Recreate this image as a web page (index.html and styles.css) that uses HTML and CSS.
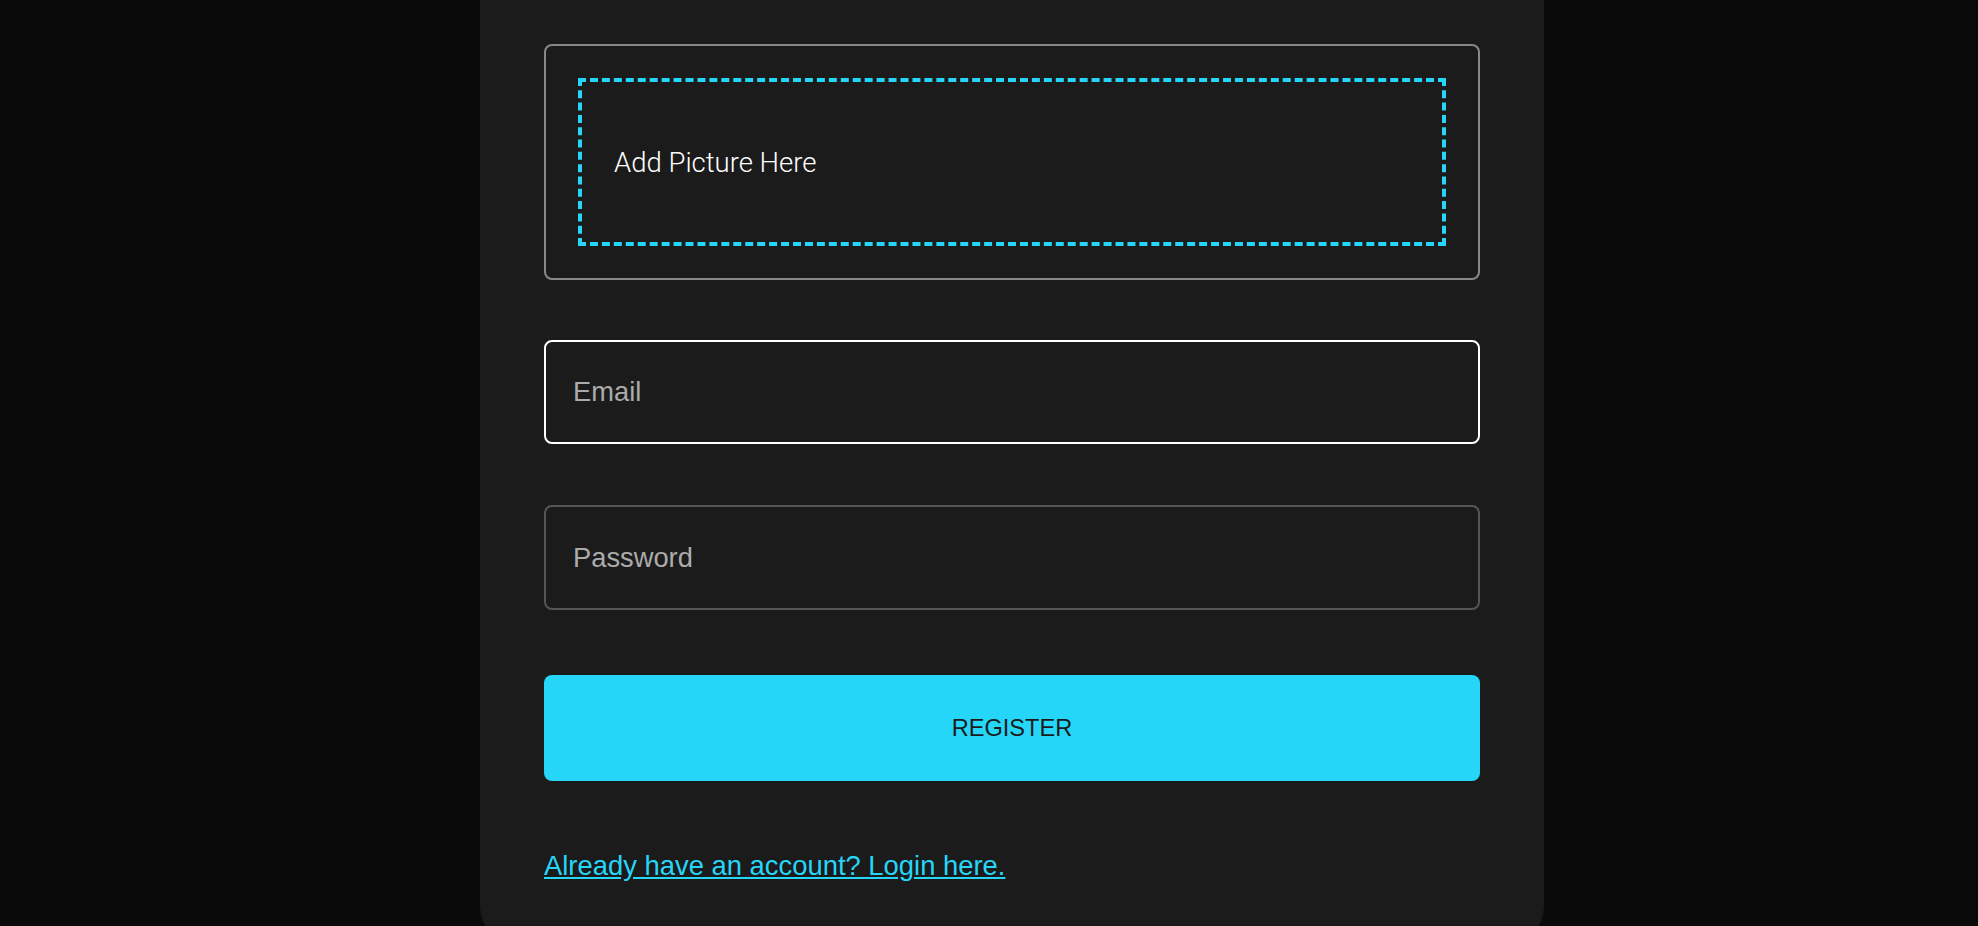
FILE: index.html
```html
<!DOCTYPE html>
<html lang="en">
<head>
<meta charset="utf-8">
<title>Register</title>
<link rel="stylesheet" href="styles.css">
</head>
<body>
<div class="page">
  <main class="card">
    <form class="form">
      <div class="picture-field">
        <div class="picture-drop">
          <span class="picture-label">Add Picture Here</span>
        </div>
      </div>
      <input class="input input-email" type="email" placeholder="Email">
      <input class="input input-password" type="password" placeholder="Password">
      <button class="register-btn" type="button">REGISTER</button>
      <a class="login-link" href="#">Already have an account? Login here.</a>
    </form>
  </main>
</div>
</body>
</html>
```

FILE: styles.css
```css
html, body {
  margin: 0;
  padding: 0;
  background: #0a0a0a;
  overflow: hidden;
}

.page {
  display: flex;
  justify-content: center;
  padding-left: 46px;
}

.card {
  width: 1064px;
  box-sizing: border-box;
  margin-top: -40px;
  padding: 84px 64px 64px;
  background: #1b1b1b;
  border-radius: 40px;
}

.form {
  display: flex;
  flex-direction: column;
  align-items: stretch;
}

.picture-field {
  border: 2px solid #888888;
  border-radius: 8px;
  padding: 32px;
}

.picture-drop {
  height: 168px;
  box-sizing: border-box;
  border: 4px dashed #26d6f8;
  padding: 0 32px;
  display: flex;
  align-items: center;
}

.picture-label {
  font-family: Roboto, "Liberation Sans", sans-serif;
  font-weight: 300;
  font-size: 27.5px;
  color: #ffffff;
}

.input {
  display: block;
  box-sizing: border-box;
  width: 100%;
  height: 104px;
  margin: 0;
  padding: 0 27px;
  background: #1b1b1b;
  border: 2px solid #555555;
  border-radius: 8px;
  font-family: "Liberation Sans", Arial, sans-serif;
  font-size: 27.3px;
  color: #eeeeee;
  outline: none;
}

.input::placeholder {
  color: #ababab;
  opacity: 1;
}

.input-email {
  margin-top: 60px;
  border-color: #ffffff;
}

.input-password {
  margin-top: 61px;
  height: 105px;
}

.register-btn {
  margin-top: 65px;
  height: 106px;
  width: 100%;
  border: none;
  border-radius: 8px;
  background: #26d6f8;
  color: #1b1b1b;
  font-family: "Liberation Sans", Arial, sans-serif;
  font-size: 23.6px;
  cursor: pointer;
}

.login-link {
  align-self: flex-start;
  margin-top: 69px;
  font-family: "Liberation Sans", Arial, sans-serif;
  font-size: 27.4px;
  color: #26d6f8;
  text-decoration: underline;
}
```
